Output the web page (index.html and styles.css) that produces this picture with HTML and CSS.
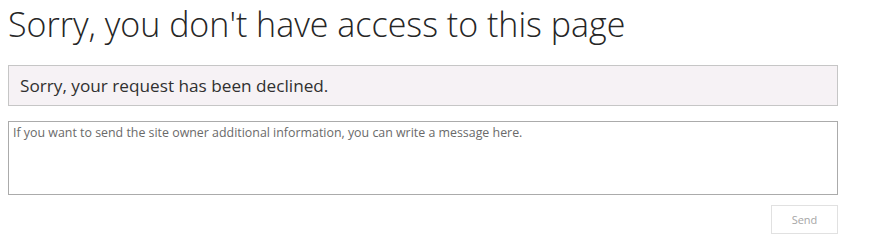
FILE: index.html
```html
<!DOCTYPE html>
<html lang="en">
<head>
<meta charset="utf-8">
<title>Access denied</title>
<link rel="stylesheet" href="styles.css">
</head>
<body>
<main class="page">
  <h1 class="title">Sorry, you don't have access to this page</h1>
  <div class="notice">Sorry, your request has been declined.</div>
  <textarea class="message" placeholder="If you want to send the site owner additional information, you can write a message here."></textarea>
  <div class="actions">
    <button class="send" type="button" disabled>Send</button>
  </div>
</main>
</body>
</html>
```

FILE: styles.css
```css
html, body {
  margin: 0;
  padding: 0;
  background: #ffffff;
}
.page {
  width: 830px;
  padding: 0 8px;
  display: flex;
  flex-direction: column;
  font-family: "Open Sans", "Noto Sans", sans-serif;
}
.title {
  margin: 0;
  height: 65px;
  box-sizing: border-box;
  padding-top: 0;
  font-weight: 300;
  font-size: 34px;
  line-height: 48px;
  color: #262626;
  white-space: nowrap;
}
.notice {
  box-sizing: border-box;
  height: 41px;
  border: 1px solid #c6c6c6;
  background: #f6f2f5;
  padding: 0 11px;
  font-size: 17.2px;
  line-height: 39px;
  color: #303030;
}
.message {
  box-sizing: border-box;
  margin: 15px 0 0;
  height: 74px;
  width: 100%;
  border: 1px solid #ababab;
  padding: 3px 4px;
  font-family: "Open Sans", "Noto Sans", sans-serif;
  font-size: 12.4px;
  line-height: 16px;
  resize: none;
  outline: none;
}
.message::placeholder {
  color: #6a6a6a;
  opacity: 1;
}
.actions {
  display: flex;
  justify-content: flex-end;
  margin-top: 10px;
}
.send {
  box-sizing: border-box;
  width: 67px;
  height: 29px;
  border: 1px solid #e1e1e1;
  background: #ffffff;
  color: #a6a6a6;
  font-family: "Open Sans", "Noto Sans", sans-serif;
  font-size: 11px;
  padding: 0;
}
```
